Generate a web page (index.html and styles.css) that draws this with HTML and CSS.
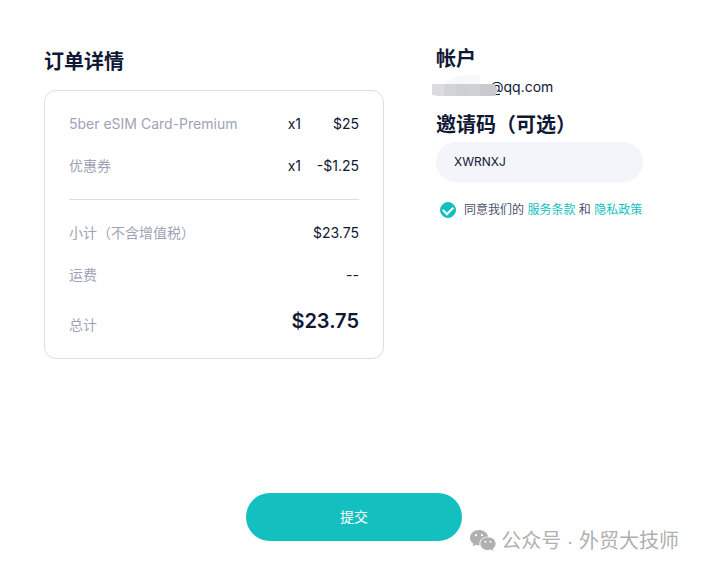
FILE: index.html
```html
<!DOCTYPE html>
<html lang="zh-CN">
<head>
<meta charset="UTF-8">
<meta name="viewport" content="width=device-width, initial-scale=1.0">
<title>订单详情</title>
<link rel="stylesheet" href="styles.css">
</head>
<body>

<form class="page">
    <div class="columns">
        <!-- Order summary -->
        <section class="order">
            <h2>订单详情</h2>
            <div class="card">
                <div class="row">
                    <span class="label">5ber eSIM Card-Premium</span>
                    <span>x1</span>
                    <span class="price">$25</span>
                </div>
                <div class="row">
                    <span class="label">优惠券</span>
                    <span>x1</span>
                    <span class="price">-$1.25</span>
                </div>
                <hr>
                <div class="row">
                    <span class="label">小计（不含增值税）</span>
                    <span class="price">$23.75</span>
                </div>
                <div class="row">
                    <span class="label">运费</span>
                    <span class="price">--</span>
                </div>
                <div class="row total">
                    <span class="label">总计</span>
                    <span class="price">$23.75</span>
                </div>
            </div>
        </section>

        <!-- Account -->
        <section class="account">
            <h2>帐户</h2>
            <p class="email">
                <span>@qq.com</span>
                <svg class="mask" width="66" height="21" viewBox="0 0 66 21" aria-hidden="true">
                    <path d="M14 9V6L24 2L36 0H48V9Z" fill="#f8f8f9"/>
                    <path d="M0 9H12V21H6L0 20Z" fill="#dcdcde"/>
                    <path d="M12 9H24V21H12Z" fill="#d3d4d6"/>
                    <path d="M24 9H36V21H24Z" fill="#cdcfd2"/>
                    <path d="M36 9H48V21H36Z" fill="#d0d1d4"/>
                    <path d="M48 9H62L66 15L63 21H48Z" fill="#c8cacf"/>
                </svg>
            </p>
            <h2><label for="code">邀请码（可选）</label></h2>
            <input type="text" id="code" class="code" name="code" value="XWRNXJ">
            <div class="agree">
                <input type="checkbox" id="agree" name="agree" checked>
                <label for="agree">同意我们的 <a href="#">服务条款</a> 和 <a href="#">隐私政策</a></label>
            </div>
        </section>
    </div>

    <button type="submit" class="btn">提交</button>
</form>

<div class="watermark">
    <svg width="26" height="22" viewBox="0 0 26 22" aria-hidden="true">
        <path d="M9 0C4 0 0 3.400 0 7.700C0 10.200 1.300 12.300 3.400 13.700L2.600 16.400L5.700 14.800C7 15.200 8.200 15.400 9.600 15.300C8.600 10.400 12.600 6.600 18.100 6.400C17.200 2.700 13.500 0 9 0Z" fill="#b0b0b0"/>
        <path d="M18 7.300C13.700 7.300 10.400 10.100 10.400 13.700C10.400 17.200 13.700 20.100 18 20.100C19 20.100 20 19.900 20.900 19.600L23.400 21L22.800 18.700C24.500 17.500 25.600 15.700 25.600 13.700C25.600 10.100 22.200 7.300 18 7.300Z" fill="#b0b0b0"/>
        <g fill="#fff">
            <circle cx="6" cy="5.200" r="1.100"/>
            <circle cx="12" cy="5.200" r="1.100"/>
            <circle cx="15.500" cy="11.700" r="1"/>
            <circle cx="20.500" cy="11.700" r="1"/>
        </g>
    </svg>
    <span>公众号 · 外贸大技师</span>
</div>

</body>
</html>
```

FILE: styles.css
```css
* {
    box-sizing: border-box;
}
body {
    margin: 0;
    background: #fff;
    color: #0f1834;
    font-family: Inter, "Noto Sans CJK SC", sans-serif;
    font-size: 14px;
    line-height: 22px;
}
.page {
    padding: 47px 37px 27px 44px;
}
.columns {
    display: grid;
    grid-template-columns: 340fr 228fr;
    gap: 52px;
}
h2 {
    margin: 0;
    font-size: 20px;
    line-height: 30px;
    font-weight: 700;
}
.card {
    margin-top: 13px;
    padding: 22px 24px;
    border: 1px solid #dedede;
    border-radius: 12px;
}
.row {
    display: flex;
    align-items: flex-end;
}
.row + .row {
    margin-top: 20px;
}
.label {
    flex: 1;
    color: #a0a3b5;
}
.price {
    width: 58px;
    text-align: right;
    white-space: nowrap;
}
hr {
    height: 1px;
    margin: 22px 0;
    border: 0;
    background: #dedede;
}
.total .price {
    width: auto;
    font-size: 20px;
    line-height: 30px;
    font-weight: 600;
}
.account {
    margin-top: -3px;
    padding-right: 21px;
}
.email {
    position: relative;
    margin: 2px 0 12px;
    padding-left: 54px;
}
.mask {
    position: absolute;
    left: -4px;
    top: -1px;
}
.code {
    display: block;
    width: 100%;
    height: 40px;
    margin-top: 2px;
    padding: 0 18px 2px;
    border: 0;
    border-radius: 20px;
    background: #f4f5fa;
    color: #0f1834;
    font-family: inherit;
    font-size: 12px;
}
.agree {
    display: flex;
    align-items: center;
    gap: 8px;
    margin-top: 17px;
    padding-left: 4px;
    color: #4b4f69;
    font-size: 12px;
    white-space: nowrap;
}
.agree input {
    display: grid;
    place-items: center;
    appearance: none;
    flex: none;
    width: 16px;
    height: 16px;
    margin: 0;
    border: 1px solid #14bfbf;
    border-radius: 50%;
}
.agree input:checked {
    background: #14bfbf;
}
.agree input:checked::before {
    content: "";
    width: 8px;
    height: 5px;
    margin-bottom: 2px;
    border: solid #fff;
    border-width: 0 0 2px 2px;
    transform: rotate(-45deg);
}
.agree a {
    color: #14bfbf;
    text-decoration: none;
}
.btn {
    display: block;
    width: 216px;
    height: 48px;
    margin: 134px auto 0;
    padding: 0 0 2px;
    border: 0;
    border-radius: 24px;
    background: #14bfbf;
    color: #fff;
    font-family: inherit;
    font-size: 14px;
    cursor: pointer;
}
.watermark {
    position: absolute;
    right: 22px;
    bottom: 12px;
    display: flex;
    align-items: center;
    gap: 5px;
    color: #b0b0b0;
    font-family: "Liberation Sans", "Noto Sans CJK SC", sans-serif;
    font-size: 20px;
    line-height: 30px;
    white-space: nowrap;
}
```
